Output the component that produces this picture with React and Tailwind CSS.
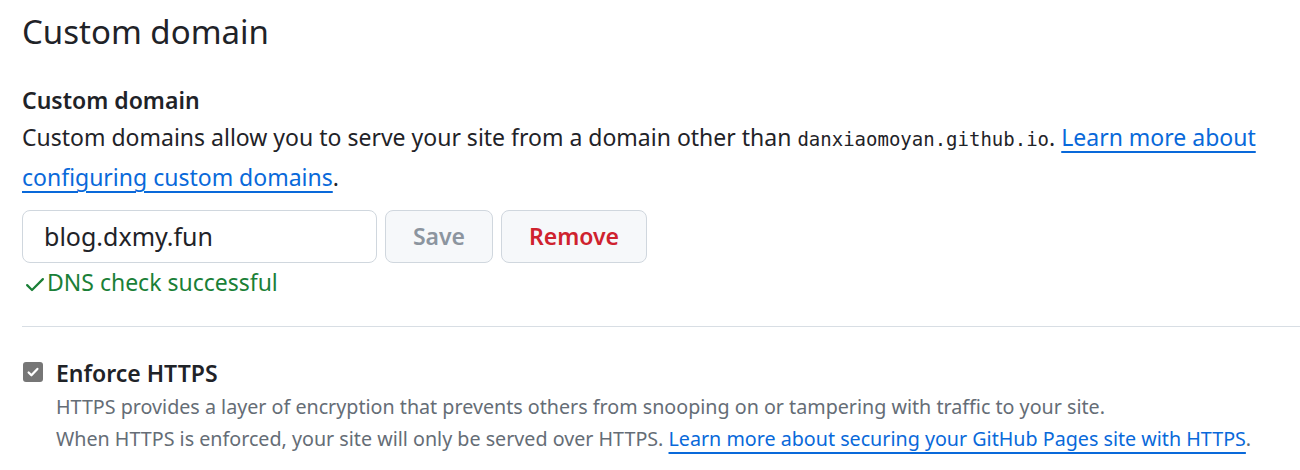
export default function App() {
  const sans = { fontFamily: '"Noto Sans", "Open Sans", sans-serif' };
  return (
    <div className="bg-white w-[1300px] h-[470px] overflow-hidden text-[#1f2328]" style={sans}>
      <div className="pl-[22px] pt-[9px]">
        <h2 className="text-[33px] leading-[46px] font-normal">Custom domain</h2>
        <div className="mt-[31px] text-[23px] leading-[28px] font-semibold">Custom domain</div>
        <p className="mt-[4px] text-[23px] leading-[38px]">
          Custom domains allow you to serve your site from a domain other than{" "}
          <code className="text-[19px]" style={{ fontFamily: '"DejaVu Sans Mono", "Liberation Mono", monospace' }}>danxiaomoyan.github.io</code>.{" "}
          <a className="text-[#0969da] underline decoration-2 underline-offset-[5px]" href="#">Learn more about<br />configuring custom domains</a>.
        </p>
        <div className="mt-[14px] flex gap-[8px]">
          <div className="w-[355px] h-[53px] rounded-[8px] border border-[#d0d7de] flex items-center px-[21px] text-[25px]">blog.dxmy.fun</div>
          <button className="w-[108px] h-[53px] rounded-[8px] border border-[#d0d7de] bg-[#f6f8fa] text-[#8c959f] text-[23px] font-semibold">Save</button>
          <button className="w-[146px] h-[53px] rounded-[8px] border border-[#d0d7de] bg-[#f6f8fa] text-[#cf222e] text-[23px] font-semibold">Remove</button>
        </div>
        <div className="mt-[4px] flex items-center text-[#1a7f37] text-[23px] leading-[30px]">
          <svg width="24" height="24" viewBox="0 0 16 16" fill="currentColor" className="ml-[1px] mt-[3px]">
            <path d="M13.78 4.22a.75.75 0 0 1 0 1.06l-7.25 7.25a.75.75 0 0 1-1.06 0L2.22 9.28a.751.751 0 0 1 .018-1.042.751.751 0 0 1 1.042-.018L6 10.94l6.72-6.72a.75.75 0 0 1 1.06 0Z" />
          </svg>
          <span>DNS check successful</span>
        </div>
        <div className="mt-[29px] border-t border-[#d8dee4]" />
        <div className="mt-[34px] flex">
          <div className="w-[20px] h-[20px] mt-[1px] ml-[1px] rounded-[3px] bg-[#767676] flex items-center justify-center">
            <svg width="14" height="14" viewBox="0 0 16 16" fill="none" stroke="white" strokeWidth="2.6" strokeLinecap="round" strokeLinejoin="round">
              <path d="M3 8.5l3.2 3.2L13 4.5" />
            </svg>
          </div>
          <div className="ml-[13px]">
            <div className="text-[23px] leading-[24px] font-semibold">Enforce HTTPS</div>
            <div className="mt-[6px] text-[19.7px] leading-[32px] text-[#656d76]">
              HTTPS provides a layer of encryption that prevents others from snooping on or tampering with traffic to your site.
              <br />
              When HTTPS is enforced, your site will only be served over HTTPS.{" "}
              <a className="text-[#0969da] underline decoration-2 underline-offset-[6px]" href="#">Learn more about securing your GitHub Pages site with HTTPS</a>.
            </div>
          </div>
        </div>
      </div>
    </div>
  );
}
